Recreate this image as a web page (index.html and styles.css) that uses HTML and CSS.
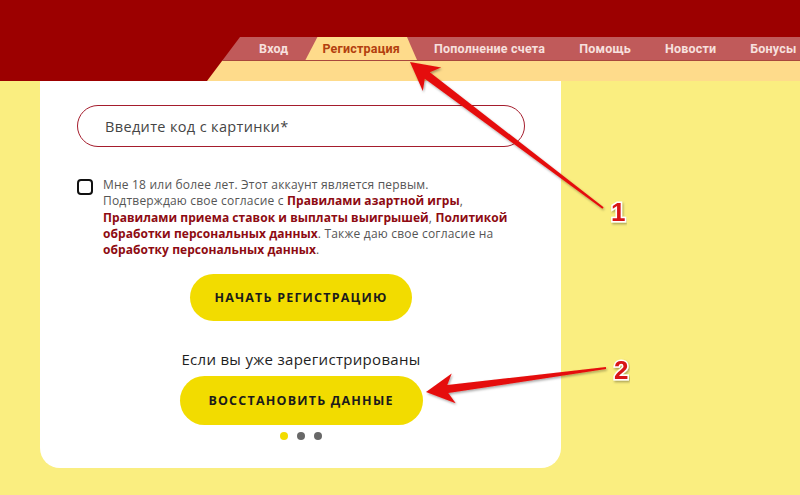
FILE: index.html
```html
<!DOCTYPE html>
<html lang="ru">
<head>
<meta charset="utf-8">
<title>Регистрация</title>
<link rel="stylesheet" href="styles.css">
</head>
<body>
<header class="top">
  <nav class="nav">
    <ul class="tabs">
      <li class="tab">Вход</li>
      <li class="tab active">Регистрация</li>
      <li class="tab">Пополнение счета</li>
      <li class="tab">Помощь</li>
      <li class="tab">Новости</li>
      <li class="tab">Бонусы</li>
    </ul>
    <div class="strip"></div>
  </nav>
</header>
<main class="card">
  <div class="field">Введите код с картинки*</div>
  <div class="consent">
    <span class="check"></span>
    <p>Мне 18 или более лет. Этот аккаунт является первым.<br>Подтверждаю свое согласие с <b>Правилами азартной игры</b>,<br><b>Правилами приема ставок и выплаты выигрышей</b>, <b>Политикой</b><br><b>обработки персональных данных</b>. Также даю свое согласие на<br><b>обработку персональных данных</b>.</p>
  </div>
  <div class="actions">
    <div class="btn btn-start">НАЧАТЬ РЕГИСТРАЦИЮ</div>
    <div class="hint">Если вы уже зарегистрированы</div>
    <div class="btn btn-restore">ВОССТАНОВИТЬ ДАННЫЕ</div>
    <div class="dots"><span class="dot on"></span><span class="dot"></span><span class="dot"></span></div>
  </div>
</main>
<svg class="overlay" width="800" height="495" viewBox="0 0 800 495">
  <defs>
    <filter id="sh" x="-10%" y="-10%" width="120%" height="120%">
      <feDropShadow dx="1" dy="1.5" stdDeviation="1" flood-color="#000" flood-opacity="0.35"/>
    </filter>
  </defs>
  <polygon class="arrow" points="410,62 441.2,67.4 429.8,72.3 603.6,207.2 602.4,208.8 424.8,78.7 422.8,91"/>
  <polygon class="arrow" points="426,392 451.7,373.4 447.3,385.1 605.9,367 606.1,369 448.3,393.1 455.7,403.2"/>
  <text class="num" x="611" y="221">1</text>
  <text class="num" x="614" y="379">2</text>
</svg>
</body>
</html>
```
FILE: styles.css
```css
html, body {
  margin: 0;
  padding: 0;
}
body {
  width: 800px;
  height: 495px;
  overflow: hidden;
  position: relative;
  background: #faee80;
  font-family: "Open Sans", "Noto Sans", sans-serif;
}
.top {
  height: 81px;
  background: #9c0000;
  display: flex;
  justify-content: flex-end;
  align-items: flex-end;
}
.nav {
  width: 593px;
  height: 44px;
  display: flex;
  flex-direction: column;
  clip-path: polygon(33px 0, 100% 0, 100% 100%, 0 100%);
}
.tabs {
  height: 24px;
  box-sizing: border-box;
  margin: 0;
  padding: 0 0 0 35px;
  list-style: none;
  display: flex;
  background: #c05a5a;
  border-bottom: 1px solid #a8473c;
  overflow: hidden;
}
.tab {
  padding: 0 17px;
  font: bold 12.5px/23px Roboto, "Liberation Sans", sans-serif;
  letter-spacing: 0.2px;
  color: #f7e0de;
  white-space: nowrap;
}
.tab.active {
  background: #fedb8b;
  color: #b2400e;
  clip-path: polygon(12px 0, calc(100% - 10px) 0, 100% 100%, 0 100%);
}
.strip {
  flex: 1;
  background: #fedb8b;
}
.card {
  margin-left: 40px;
  width: 521px;
  height: 387px;
  box-sizing: border-box;
  padding: 24px 36px 0 37px;
  background: #fff;
  border-radius: 0 0 20px 20px;
  display: flex;
  flex-direction: column;
}
.field {
  width: 448px;
  height: 42px;
  box-sizing: border-box;
  border: 1.5px solid #a51d2d;
  border-radius: 21px;
  display: flex;
  align-items: center;
  padding-left: 27px;
  font-size: 14.5px;
  letter-spacing: 0.35px;
  color: #454545;
}
.consent {
  display: flex;
  gap: 10px;
  margin-top: 30px;
}
.check {
  flex: none;
  width: 16px;
  height: 16px;
  box-sizing: border-box;
  border: 2px solid #111;
  border-radius: 4px;
  margin-top: 2px;
}
.consent p {
  margin: 0;
  font-size: 12px;
  line-height: 16.3px;
  letter-spacing: 0.2px;
  color: #555;
}
.consent b {
  color: #8e0b12;
  letter-spacing: 0.05px;
}
.actions {
  display: flex;
  flex-direction: column;
  align-items: center;
}
.btn {
  display: flex;
  align-items: center;
  justify-content: center;
  background: #f2dc00;
  font-weight: bold;
  font-size: 12.5px;
  letter-spacing: 1.2px;
  color: #1b1b1b;
}
.btn-start {
  width: 222px;
  height: 47px;
  border-radius: 24px;
  margin-top: 16px;
}
.hint {
  margin-top: 28px;
  font-size: 15px;
  line-height: 20px;
  letter-spacing: 0.3px;
  color: #1e1e1e;
}
.btn-restore {
  width: 243px;
  height: 49px;
  border-radius: 25px;
  margin-top: 7px;
}
.dots {
  display: flex;
  gap: 9px;
  margin-top: 7px;
}
.dot {
  width: 8px;
  height: 8px;
  border-radius: 50%;
  background: #686868;
}
.dot.on {
  background: #f2dc00;
}
.overlay {
  position: absolute;
  left: 0;
  top: 0;
  pointer-events: none;
}
.arrow {
  fill: #e5100c;
  filter: url(#sh);
}
.num {
  font: bold 26px "Liberation Sans", sans-serif;
  fill: #d81418;
  stroke: #fff;
  stroke-width: 3px;
  paint-order: stroke;
  filter: url(#sh);
}
```
